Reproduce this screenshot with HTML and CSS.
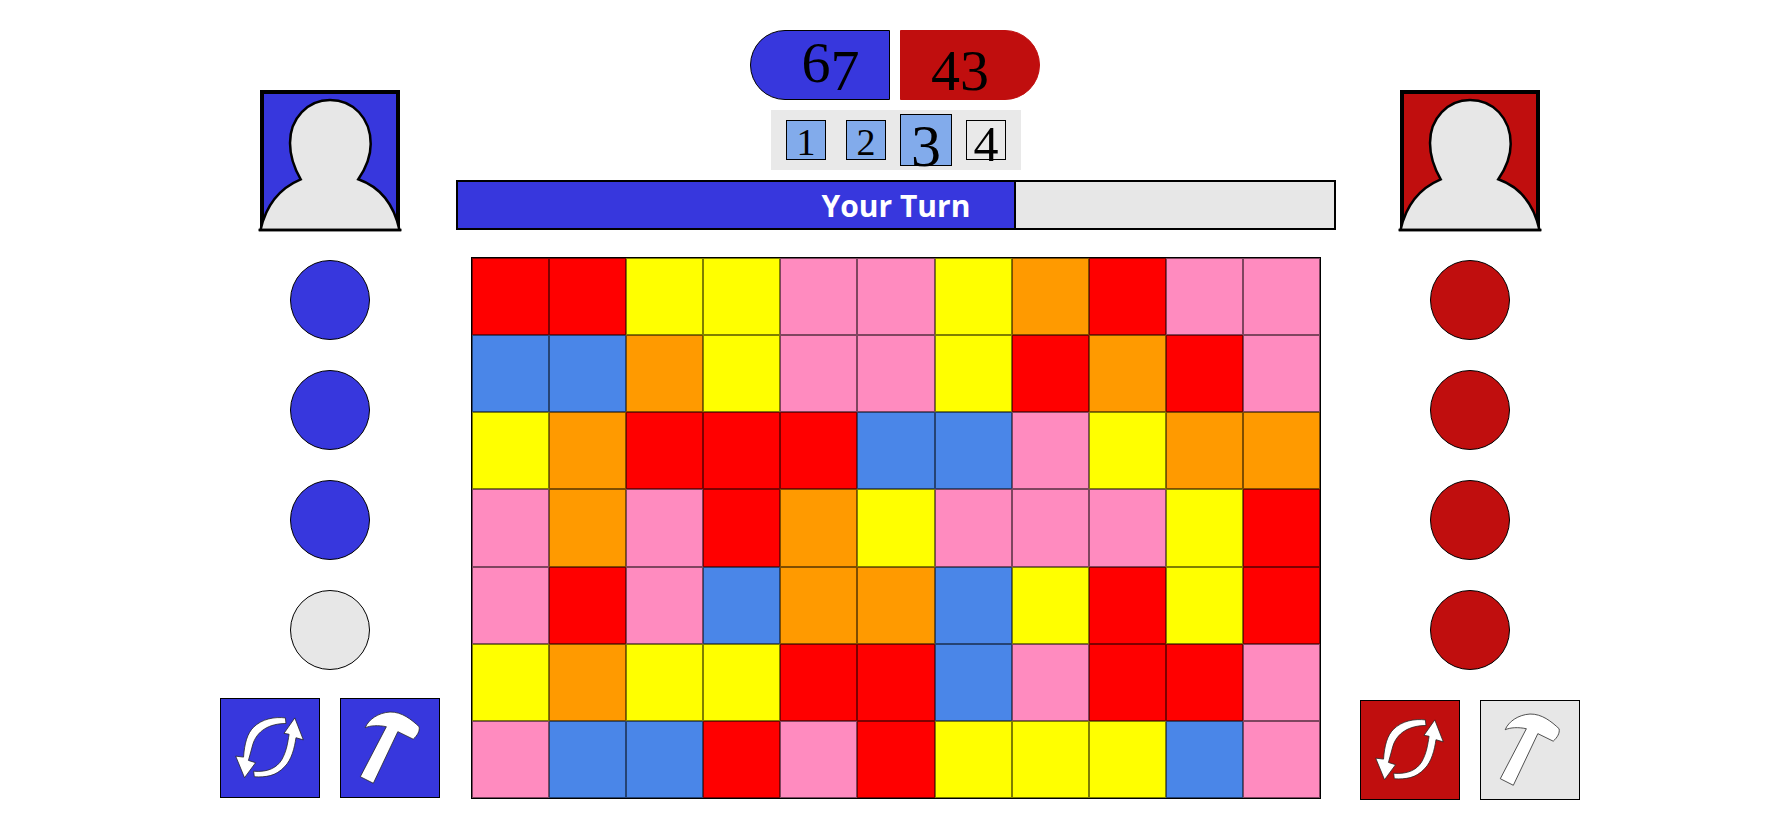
FILE: index.html
```html
<!DOCTYPE html>
<html lang="en">
<head>
<meta charset="utf-8">
<title>Your Turn</title>
<link rel="stylesheet" href="styles.css">
</head>
<body>
<svg class="defs" width="0" height="0" aria-hidden="true">
  <defs>
    <symbol id="person" viewBox="0 0 140 141" overflow="visible">
      <path class="person-line" d="M0.5 140 C6 115 20 98 40.7 89.3 C33 76 30 65 30 53 C30 28 48 10 70 10 C93 10 110.7 28 110.7 54 C110.7 66 106 78 98.3 89.3 C120 97 134 115 139.5 140 Z"/>
      <path class="person-base" d="M-1.5 140 H141.5"/>
    </symbol>
    <symbol id="swap" viewBox="0 0 100 100">
      <path d="M65.7 19.3 L66.3 25 C50 25 36 32 32 48 L28 62.7 L35.3 65 L24 80.3 L15 58.3 L23 59.3 C24 45 27 35 33 29 C42 20 55 18 65.7 19.3 Z"/>
      <path d="M33.3 73.7 C48 75 57 70 62 62 C67 53 68 45 69.5 36 L64.3 35 L75.3 19.3 L84 41.7 L76.5 39.5 C75 50 72 62 65 69 C56 79 45 80 34 79.3 Z"/>
    </symbol>
    <symbol id="hammer" viewBox="0 0 100 100">
      <path d="M24.7 29.3 C28 21 38 14 50 13.3 C62 13 72 21 79.7 28.3 C80.5 33 78 37 73.7 41 L58 33.3 L33 86 L19.7 79.3 L46.3 28.3 C38 26.5 30 27 24.7 29.3 Z"/>
    </symbol>
  </defs>
</svg>
<main class="game">
  <aside class="player player-blue">
    <div class="avatar"><svg class="person"><use href="#person"/></svg></div>
    <div class="lives">
      <span class="life"></span><span class="life"></span><span class="life"></span><span class="life life-empty"></span>
    </div>
    <div class="tools">
      <button class="tool"><svg class="tool-icon"><use href="#swap"/></svg></button>
      <button class="tool"><svg class="tool-icon"><use href="#hammer"/></svg></button>
    </div>
  </aside>

  <section class="center">
    <div class="scores">
      <div class="score score-blue">6<span class="drop">7</span></div>
      <div class="score score-red"><span class="drop">4</span><span class="drop">3</span></div>
    </div>
    <div class="rounds">
      <div class="round round-done num-small">1</div>
      <div class="round round-done num-small">2</div>
      <div class="round round-done round-current">3</div>
      <div class="round num-mid">4</div>
    </div>
    <div class="turn-bar">
      <div class="turn-fill"></div>
      <div class="turn-text">Your Turn</div>
    </div>
    <div class="board">
      <div class="cell r"></div><div class="cell r"></div><div class="cell y"></div><div class="cell y"></div><div class="cell p"></div><div class="cell p"></div><div class="cell y"></div><div class="cell o"></div><div class="cell r"></div><div class="cell p"></div><div class="cell p"></div>
      <div class="cell b"></div><div class="cell b"></div><div class="cell o"></div><div class="cell y"></div><div class="cell p"></div><div class="cell p"></div><div class="cell y"></div><div class="cell r"></div><div class="cell o"></div><div class="cell r"></div><div class="cell p"></div>
      <div class="cell y"></div><div class="cell o"></div><div class="cell r"></div><div class="cell r"></div><div class="cell r"></div><div class="cell b"></div><div class="cell b"></div><div class="cell p"></div><div class="cell y"></div><div class="cell o"></div><div class="cell o"></div>
      <div class="cell p"></div><div class="cell o"></div><div class="cell p"></div><div class="cell r"></div><div class="cell o"></div><div class="cell y"></div><div class="cell p"></div><div class="cell p"></div><div class="cell p"></div><div class="cell y"></div><div class="cell r"></div>
      <div class="cell p"></div><div class="cell r"></div><div class="cell p"></div><div class="cell b"></div><div class="cell o"></div><div class="cell o"></div><div class="cell b"></div><div class="cell y"></div><div class="cell r"></div><div class="cell y"></div><div class="cell r"></div>
      <div class="cell y"></div><div class="cell o"></div><div class="cell y"></div><div class="cell y"></div><div class="cell r"></div><div class="cell r"></div><div class="cell b"></div><div class="cell p"></div><div class="cell r"></div><div class="cell r"></div><div class="cell p"></div>
      <div class="cell p"></div><div class="cell b"></div><div class="cell b"></div><div class="cell r"></div><div class="cell p"></div><div class="cell r"></div><div class="cell y"></div><div class="cell y"></div><div class="cell y"></div><div class="cell b"></div><div class="cell p"></div>
    </div>
  </section>

  <aside class="player player-red">
    <div class="avatar"><svg class="person"><use href="#person"/></svg></div>
    <div class="lives">
      <span class="life"></span><span class="life"></span><span class="life"></span><span class="life"></span>
    </div>
    <div class="tools">
      <button class="tool"><svg class="tool-icon"><use href="#swap"/></svg></button>
      <button class="tool tool-off"><svg class="tool-icon"><use href="#hammer"/></svg></button>
    </div>
  </aside>
</main>
</body>
</html>
```
FILE: styles.css
```css
* { box-sizing: border-box; }

html, body { margin: 0; padding: 0; background: #fff; }

body {
  width: 1792px;
  height: 828px;
  overflow: hidden;
  font-family: "Liberation Serif", serif;
  color: #000;
}

.defs { position: absolute; }

.game {
  display: flex;
  align-items: flex-start;
  padding: 30px 0 0 220px;
}

.player {
  width: 220px;
  padding-top: 60px;
  display: flex;
  flex-direction: column;
  align-items: center;
  --team: #3737dd;
}

.player-red { --team: #c00e0e; margin-left: 24px; }

.avatar {
  width: 140px;
  height: 141px;
  background: var(--team);
  border: 4px solid #000;
  border-bottom: 0;
  position: relative;
}

.person {
  position: absolute;
  left: -4px;
  top: -4px;
  width: 140px;
  height: 141px;
  overflow: visible;
}

.person-line { fill: #e7e7e7; stroke: #000; stroke-width: 2.5; }
.person-base { fill: none; stroke: #000; stroke-width: 2.5; }

.lives {
  margin-top: 29px;
  display: flex;
  flex-direction: column;
  gap: 30px;
}

.life {
  display: block;
  width: 80px;
  height: 80px;
  border-radius: 50%;
  background: var(--team);
  border: 1px solid #000;
}

.life-empty { background: #e7e7e7; }

.tools {
  margin-top: 28px;
  display: flex;
  gap: 20px;
}

.player-red .tools { margin-top: 30px; }

.tool {
  width: 100px;
  height: 100px;
  padding: 0;
  display: block;
  background: var(--team);
  border: 1px solid #000;
}

.tool-off { background: #e7e7e7; }

.tool-icon {
  display: block;
  width: 98px;
  height: 98px;
  fill: #fff;
  stroke: #222;
  stroke-width: 0.8;
  overflow: visible;
}

.center {
  width: 880px;
  margin-left: 16px;
  display: flex;
  flex-direction: column;
}

.scores {
  display: flex;
  justify-content: center;
  gap: 10px;
  padding-right: 2px;
}

.score {
  width: 140px;
  height: 70px;
  text-align: center;
  font-size: 58px;
  line-height: 63px;
}

.score-blue {
  background: #3737dd;
  border: 1px solid #000;
  border-radius: 35px 0 0 35px;
  padding-left: 21px;
}

.score-red {
  background: #c00e0e;
  border: 1px solid #c00e0e;
  border-radius: 0 35px 35px 0;
  padding-right: 20px;
}

.drop { vertical-align: -8px; }

.rounds {
  width: 250px;
  height: 60px;
  margin: 10px auto 0;
  background: #e9e9e9;
  display: flex;
  align-items: center;
  justify-content: center;
  gap: 20px;
}

.round {
  width: 40px;
  height: 40px;
  border: 1px solid #000;
  text-align: center;
}

.round-done { background: #82abeb; }

.num-small { font-size: 38px; line-height: 42px; }
.num-mid { font-size: 50px; line-height: 46px; }

.round-current {
  width: 52px;
  height: 52px;
  margin: 0 -6px;
  font-size: 60px;
  line-height: 63px;
}

.turn-bar {
  height: 50px;
  margin-top: 10px;
  background: #e7e7e7;
  border: 2px solid #000;
  position: relative;
}

.turn-fill {
  width: 558px;
  height: 100%;
  background: #3737dd;
  border-right: 2px solid #000;
}

.turn-text {
  position: absolute;
  inset: 0;
  display: flex;
  align-items: center;
  justify-content: center;
  font-family: "Open Sans", sans-serif;
  font-weight: 700;
  font-size: 30px;
  color: #fff;
}

.board {
  width: 850px;
  height: 542px;
  margin: 27px 0 0 15px;
  border: 1px solid #000;
  display: grid;
  grid-template-columns: repeat(11, 1fr);
  grid-template-rows: repeat(7, 1fr);
}

.cell { border: 1px solid rgba(0, 0, 0, 0.5); }

.r { background: #ff0000; }
.y { background: #ffff00; }
.p { background: #ff8bbf; }
.o { background: #ff9a00; }
.b { background: #4a86e8; }
```
